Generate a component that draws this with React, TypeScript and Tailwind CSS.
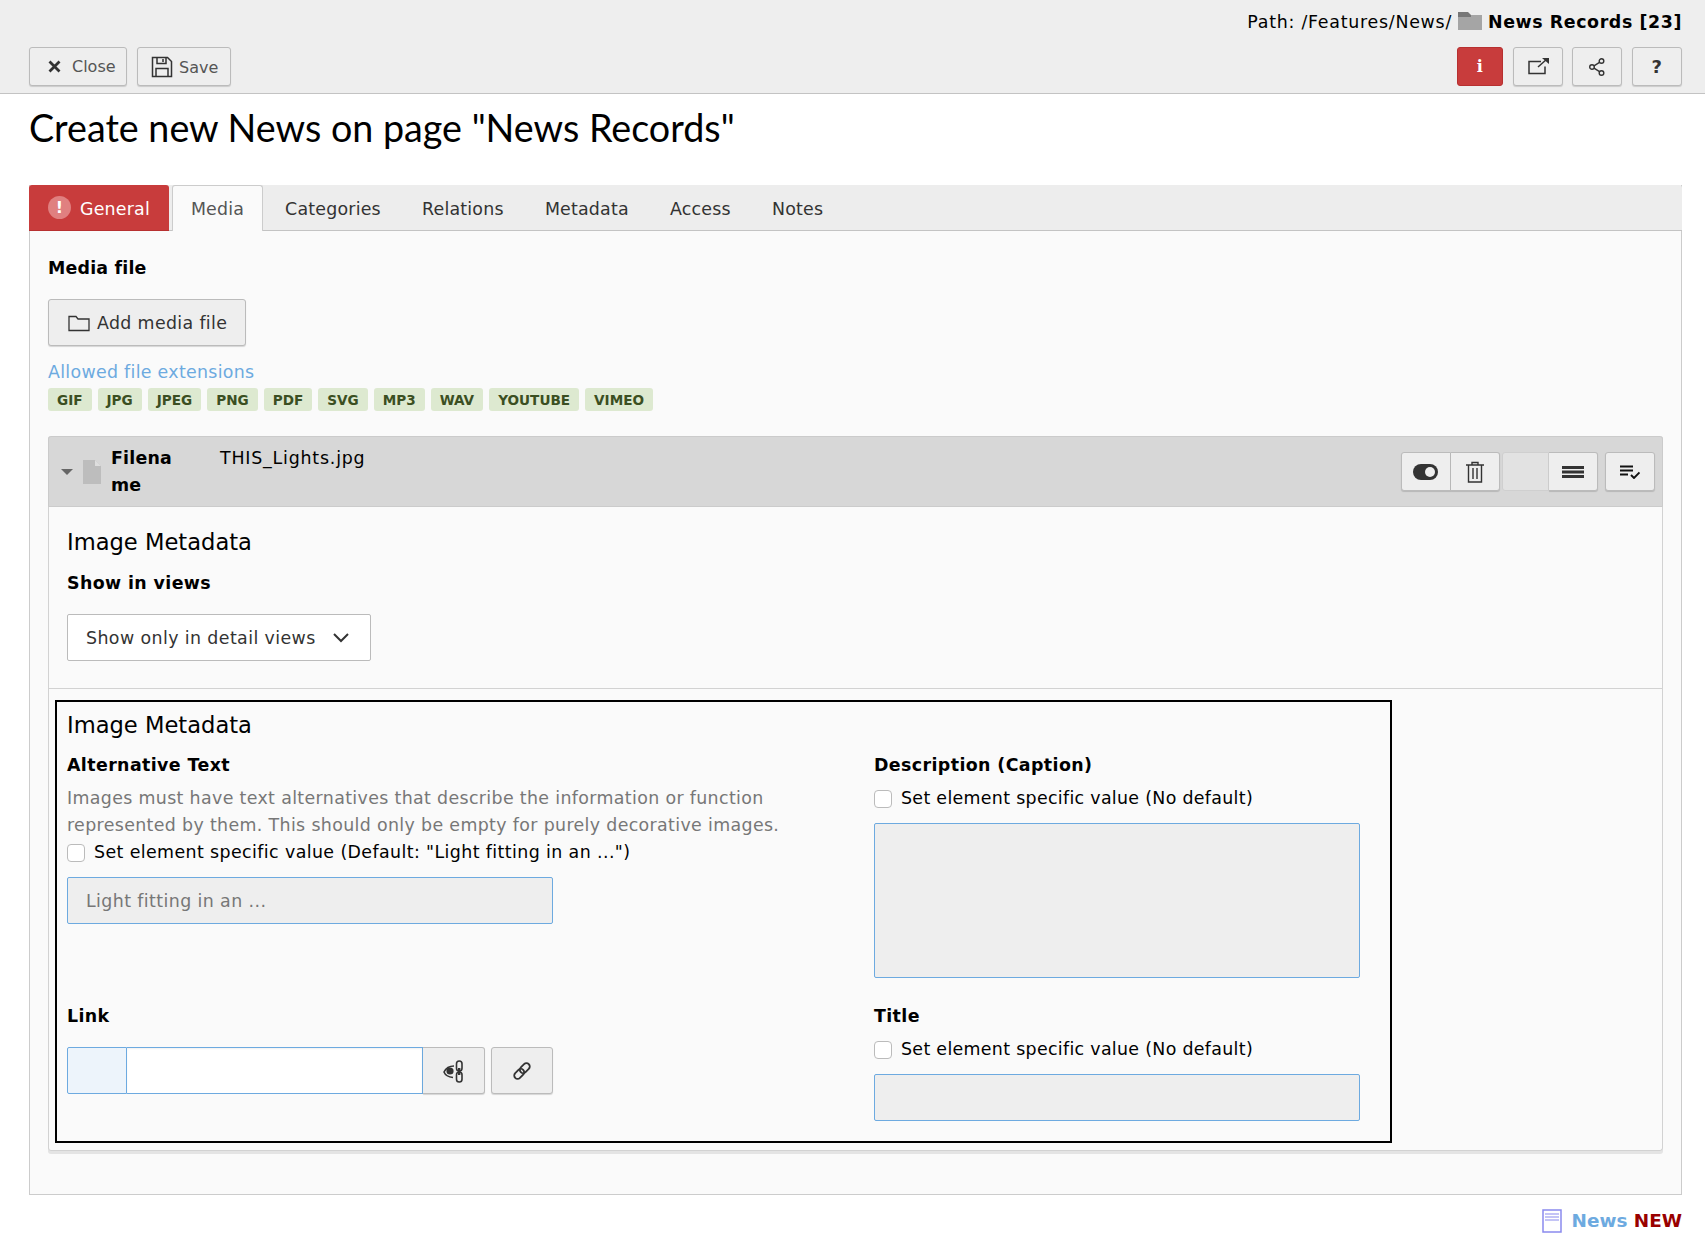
import React from "react";

const dv = "font-['DejaVu_Sans',Verdana,sans-serif]";
const btn = "bg-[#eeeeee] border border-[#bbbbbb] rounded-[3px] shadow-[0_1px_1px_rgba(0,0,0,0.15)] flex items-center justify-center";

function Check({ label, tight }: { label: string; tight?: boolean }) {
  return (
    <div className={`flex items-center h-[27px] text-[#000] ${tight ? "tracking-[0.32px]" : ""}`}>
      <span className="w-[18px] h-[18px] bg-white border border-[#bbbbbb] rounded-[4px] mr-[9px] shrink-0" />
      <span>{label}</span>
    </div>
  );
}

export default function App() {
  const tabs = ["Categories", "Relations", "Metadata", "Access", "Notes"];
  const exts = ["GIF", "JPG", "JPEG", "PNG", "PDF", "SVG", "MP3", "WAV", "YOUTUBE", "VIMEO"];
  return (
    <div className={`${dv} bg-white w-[1705px] h-[1257px] text-[17.4px] tracking-[0.4px] text-[#000] overflow-hidden`}>
      <header className="bg-[#eeeeee] border-b border-b-[#c3c3c3] h-[94px] pl-[29px] pr-[23px]">
        <div className="h-[47px] pt-[10px] flex items-start justify-end leading-[24px] tracking-[0.75px]">
          <span>Path: /Features/News/</span>
          <svg className="mx-[6px] mt-[1px]" width="24" height="19" viewBox="0 0 24 19">
            <rect x="0" y="4" width="24" height="15" fill="#a5a5a5" />
            <path d="M0 1h10l3 3v2H0z" fill="#777" />
          </svg>
          <span className="font-bold tracking-[0.6px]">News Records [23]</span>
        </div>
        <div className="flex justify-between">
          <div className="flex gap-[10px]">
            <div className={`${btn} !justify-start pl-[18px] w-[98px] h-[39px] text-[16px] tracking-normal text-[#555] gap-[11px]`}>
              <svg width="13" height="13" viewBox="0 0 13 13" stroke="#333" strokeWidth="2.8"><path d="M1.5 1.5l10 10M11.5 1.5l-10 10" /></svg>
              <span className="pt-px">Close</span>
            </div>
            <div className={`${btn} !justify-start pl-[13px] w-[94px] h-[39px] text-[16px] tracking-normal text-[#555] gap-[6px]`}>
              <svg width="22" height="22" viewBox="0 0 22 22" fill="none" stroke="#333" strokeWidth="1.5">
                <path d="M1.5 1.5h15l4 4v15h-19z" /><path d="M6 1.5v6h9v-6M12 3v3" /><path d="M5 20.5v-8h12v8" />
              </svg>
              <span className="pt-[3px]">Save</span>
            </div>
          </div>
          <div className="flex">
            <div className="w-[46px] h-[39px] bg-[#c83c3c] border border-[#b73030] rounded-[3px] flex items-center justify-center text-white font-bold text-[16px] font-['DejaVu_Serif',serif]">i</div>
            <div className={`${btn} w-[50px] h-[39px] ml-[10px]`}>
              <svg className="ml-[2px] -mt-[2px]" width="22" height="18" viewBox="0 0 22 18" fill="none" stroke="#333" strokeWidth="1.5">
                <path d="M13 4.5H1v12h16v-7" /><path d="M10 10l9-8" /><path d="M14 1h7v6z" fill="#333" stroke="none" />
              </svg>
            </div>
            <div className={`${btn} w-[50px] h-[39px] ml-[9px]`}>
              <svg width="16" height="18" viewBox="0 0 16 18" fill="none" stroke="#333" strokeWidth="1.4">
                <circle cx="12.5" cy="3" r="2.3" /><circle cx="3" cy="9" r="2.3" /><circle cx="12.5" cy="15" r="2.3" /><path d="M5 7.8l5.5-3.5M5 10.2l5.5 3.5" />
              </svg>
            </div>
            <div className={`${btn} w-[50px] h-[39px] ml-[10px] font-bold text-[#333] text-[18px]`}>?</div>
          </div>
        </div>
      </header>

      <main className="pl-[29px] pr-[23px]">
        <h1 className="h-[91px] pt-[10px] text-[37.7px] leading-[48px] font-normal tracking-normal font-['Lato',sans-serif] text-[#000]">Create new News on page "News Records"</h1>

        <div className="border-x border-b border-[#cccccc] bg-[#fafafa] h-[1010px]">
          <div className="relative flex h-[46px] bg-[#ededed] border-b border-b-[#c3c3c3] rounded-t-[3px] -mx-px tracking-[0.2px]">
            <div className="w-[140px] h-[46px] bg-[#c83c3c] text-white flex items-center pl-[19px] gap-[9px] rounded-t-[3px] border-b border-[#b73030]">
              <span className="w-[23px] h-[23px] rounded-full bg-[#e08080] text-white font-bold flex items-center justify-center text-[16px]">!</span>
              <span className="pt-[3px]">General</span>
            </div>
            <div className="ml-[3px] w-[91px] h-[46px] bg-[#fafafa] border-x border-t border-[#cccccc] flex items-center justify-center text-[#555] rounded-t-[3px] z-10">
              <span className="pt-[2px]">Media</span>
            </div>
            <div className="flex items-center text-[#333] ml-[1.5px] pt-[3px]">
              {tabs.map((t) => (
                <span key={t} className="px-[20.6px]">{t}</span>
              ))}
            </div>
          </div>

          <div className="pl-[18px] pr-[18px]">
            <div className="pt-[23px] h-[68px] font-bold leading-[28px] tracking-[0.2px]">Media file</div>
            <div className={`${btn} !justify-start pl-[19px] w-[198px] h-[47px] gap-[7px] text-[#333]`}>
              <svg width="22" height="18" viewBox="0 0 22 18" fill="none" stroke="#333" strokeWidth="1.3">
                <path d="M1 2.5h7l2 2.5h11v11.5H1z" />
              </svg>
              <span className="pt-[2px] tracking-[0.35px]">Add media file</span>
            </div>
            <div className="mt-[13px] h-[26px] leading-[27px] tracking-[0.3px] text-[#6daae0]">Allowed file extensions</div>
            <div className="mt-[3px] flex gap-[6px] tracking-normal">
              {exts.map((e) => (
                <span key={e} className="h-[23px] px-[9px] rounded-[3px] bg-[#dde9d0] text-[#3b4f22] font-bold text-[13.6px] leading-[24px]">{e}</span>
              ))}
            </div>

            <div className="mt-[25px] border-x border-b border-[#d2d2d2] shadow-[0_3px_0_#e4e4e4] rounded-[3px]">
              <div className="relative -mx-px h-[71px] bg-[#d7d7d7] border border-[#cbcbcb] rounded-t-[3px] flex">
                <div className="w-[55px] flex items-center justify-center gap-[10px] pl-[8px] shrink-0">
                  <span className="w-0 h-0 border-x-[6px] border-x-transparent border-t-[6px] border-t-[#666]" />
                  <svg width="18" height="24" viewBox="0 0 18 24" className="shrink-0"><path d="M0 0h12l6 6v18H0z" fill="#bdbdbd" /><path d="M12 0l6 6h-6z" fill="#dedede" /></svg>
                </div>
                <div className="ml-[7px] w-[109px] pt-[8px] font-bold leading-[27px] break-all tracking-[0.2px]">Filena<br />me</div>
                <div className="pt-[8px] leading-[27px] tracking-[0.8px]">THIS_Lights.jpg</div>
                <div className="absolute right-[7px] top-[15px] flex">
                  <div className={`${btn} w-[50px] h-[39px] rounded-r-none`}>
                    <svg className="-ml-[1px]" width="25" height="16" viewBox="0 0 25 16"><rect x="0" y="0" width="25" height="16" rx="8" fill="#333" /><circle cx="17" cy="8" r="5" fill="#eee" /></svg>
                  </div>
                  <div className={`${btn} w-[49px] h-[39px] border-l-0 rounded-l-none`}>
                    <svg width="20" height="22" viewBox="0 0 20 22" fill="none" stroke="#333" strokeWidth="1.4">
                      <path d="M1 4h18M7 4V1.5h6V4M3.5 4v17h13V4M8 7v11M12 7v11" />
                    </svg>
                  </div>
                  <div className="w-[47px] h-[39px] ml-[2px] bg-[#e2e2e2] border border-[#cfcfcf] rounded-l-[3px]" />
                  <div className={`${btn} w-[49px] h-[39px] border-l-0 rounded-l-none`}>
                    <svg width="22" height="12" viewBox="0 0 22 12" fill="#333"><rect width="22" height="3" /><rect y="4.5" width="22" height="3" /><rect y="9" width="22" height="3" /></svg>
                  </div>
                  <div className={`${btn} w-[50px] h-[39px] ml-[7px]`}>
                    <svg width="20" height="14" viewBox="0 0 20 14" fill="none" stroke="#111" strokeWidth="1.9">
                      <path d="M0 1.5h13M0 5.5h13M0 9.5h8M11 10l3 3 5.5-5.5" />
                    </svg>
                  </div>
                </div>
              </div>

              <div className="px-[18px] pt-[19px] h-[182px] border-b border-b-[#d2d2d2]">
                <div className="text-[22.6px] tracking-normal leading-[32px] h-[44px]">Image Metadata</div>
                <div className="font-bold leading-[27px] h-[27px]">Show in views</div>
                <div className="mt-[17px] w-[304px] h-[47px] bg-white border border-[#bbbbbb] rounded-[2px] flex items-center pl-[18px] text-[#333] gap-[16px]">
                  <span className="pt-px">Show only in detail views</span>
                  <svg width="18" height="11" viewBox="0 0 18 11" fill="none" stroke="#333" strokeWidth="2"><path d="M2 2l7 7 7-7" /></svg>
                </div>
              </div>

              <div className="pt-[11px] pl-[6px] pb-[7px]">
                <div className="w-[1337px] h-[443px] border-2 border-black px-[10px] pt-[7px]">
                  <div className="text-[22.6px] tracking-normal leading-[32px] h-[43px]">Image Metadata</div>
                  <div className="grid grid-cols-[807px_1fr]">
                    <div className="h-[251px] flex flex-col">
                      <div className="font-bold leading-[27px] h-[33px]">Alternative Text</div>
                      <div className="text-[#777] leading-[27px] tracking-[0.35px]">Images must have text alternatives that describe the information or function<br />represented by them. This should only be empty for purely decorative images.</div>
                      <Check label={'Set element specific value (Default: "Light fitting in an ...")'} />
                      <div className="mt-[11px] w-[486px] h-[47px] bg-[#eeeeee] border border-[#6daae0] rounded-[2px] flex items-center pl-[18px] text-[#777]"><span className="pt-[2px]">Light fitting in an ...</span></div>
                    </div>
                    <div className="h-[251px] flex flex-col">
                      <div className="font-bold leading-[27px] h-[33px]">Description (Caption)</div>
                      <Check tight label="Set element specific value (No default)" />
                      <div className="mt-[11px] w-[486px] h-[155px] bg-[#eeeeee] border border-[#6daae0] rounded-[2px]" />
                    </div>
                    <div>
                      <div className="font-bold leading-[27px] h-[33px]">Link</div>
                      <div className="mt-[11px] flex w-[486px]">
                        <div className="w-[60px] h-[47px] bg-[#edf4fb] border border-[#6daae0] rounded-l-[2px]" />
                        <div className="w-[296px] h-[47px] bg-white border-y border-r border-[#6daae0] shadow-[inset_0_1px_2px_rgba(0,0,0,0.06)]" />
                        <div className={`${btn} w-[62px] h-[47px] rounded-l-none border-l-0`}>
                          <svg width="24" height="24" viewBox="0 0 24 24" fill="none" stroke="#333" strokeWidth="1.6">
                            <path d="M12 7C7 7 3.5 10 2 13c1 2.5 4 5 9 5.5" /><circle cx="8" cy="12" r="3.6" fill="#333" stroke="none" />
                            <rect x="14.5" y="2" width="5.5" height="10" rx="2.7" /><rect x="14.5" y="13" width="5.5" height="10" rx="2.7" /><path d="M17.2 9v7" strokeWidth="2.4" />
                          </svg>
                        </div>
                        <div className={`${btn} w-[62px] h-[47px] ml-[6px]`}>
                          <svg width="20" height="20" viewBox="0 0 24 24" fill="none" stroke="#333" strokeWidth="2.2">
                            <g transform="rotate(-45 12 12)">
                              <rect x="0.5" y="8" width="13.5" height="8" rx="4" />
                              <rect x="10" y="8" width="13.5" height="8" rx="4" />
                            </g>
                          </svg>
                        </div>
                      </div>
                    </div>
                    <div>
                      <div className="font-bold leading-[27px] h-[33px]">Title</div>
                      <Check tight label="Set element specific value (No default)" />
                      <div className="mt-[11px] w-[486px] h-[47px] bg-[#eeeeee] border border-[#6daae0] rounded-[2px]" />
                    </div>
                  </div>
                </div>
              </div>
            </div>
          </div>
        </div>

        <div className="mt-[14px] flex justify-end items-center gap-[10px] font-bold text-[18.4px] tracking-normal leading-[24px]">
          <svg width="20" height="24" viewBox="0 0 20 24" fill="none" stroke="#8a8aee" strokeWidth="1.5">
            <rect x="1" y="1" width="18" height="22" fill="#fff" /><path d="M3 5h14M3 8h14M3 11h14" strokeWidth="1.2" />
          </svg>
          <span><span className="text-[#6daae0]">News</span> <span className="text-[#990000]">NEW</span></span>
        </div>
      </main>
    </div>
  );
}
